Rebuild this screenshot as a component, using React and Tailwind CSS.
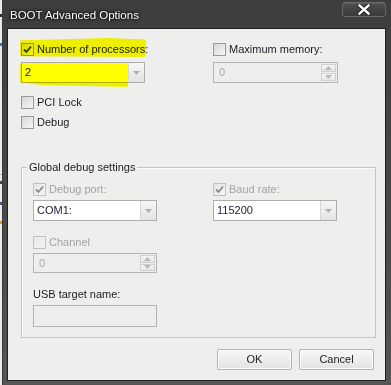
import React from "react";

function Check({ color }) {
  return (
    <svg width="9" height="9" viewBox="0 0 9 9" className="block">
      <path d="M1 4.5 L3.5 7 L8 1.5" fill="none" stroke={color} strokeWidth="1.8" />
    </svg>
  );
}

function Box({ checked, disabled }) {
  return (
    <span
      className={
        "flex h-[13px] w-[13px] shrink-0 items-center justify-center border bg-gradient-to-br " +
        (disabled
          ? "border-[#c2c2c2] from-[#e6e6e6] to-[#f4f4f4]"
          : "border-[#9a9a9a] from-[#d6d6d6] to-[#f6f6f6]")
      }
    >
      {checked && <Check color={disabled ? "#8a8a8a" : "#2a3f86"} />}
    </span>
  );
}

function CheckRow({ label, checked, disabled }) {
  return (
    <div className="flex h-[13px] items-center gap-[3px]">
      <Box checked={checked} disabled={disabled} />
      <span className={disabled ? "text-[#a3a3a3]" : "text-[#1b1b26]"}>{label}</span>
    </div>
  );
}

function Caret({ up, color = "#8c8c8c" }) {
  return (
    <svg width="7" height="4" viewBox="0 0 7 4" className="block">
      <path d={up ? "M0 4 L3.5 0 L7 4 Z" : "M0 0 L7 0 L3.5 4 Z"} fill={color} />
    </svg>
  );
}

function Combo({ value }) {
  return (
    <div className="flex h-[21px] w-[124px] border border-[#adadad] bg-white">
      <span className="flex flex-1 items-center pl-[3px] text-[#23233a]">{value}</span>
      <span className="flex w-[16px] items-center justify-center border-l border-[#d6d6d6] bg-gradient-to-b from-[#f6f6f6] to-[#e4e4e4]">
        <Caret color="#b0b0b0" />
      </span>
    </div>
  );
}

function Spin({ value, width = "w-[125px]", height = "h-[21px]" }) {
  return (
    <div className={"flex border border-[#b4b4b4] " + width + " " + height}>
      <span className="flex flex-1 items-center pl-[5px] text-[#a8a8a8]">{value}</span>
      <span className="flex w-[17px] flex-col gap-[1px] p-[1px]">
        <span className="flex flex-1 items-center justify-center border border-[#cfcfcf] bg-gradient-to-b from-[#f4f4f4] to-[#e6e6e6]">
          <Caret up color="#b8b8b8" />
        </span>
        <span className="flex flex-1 items-center justify-center border border-[#cfcfcf] bg-gradient-to-b from-[#f4f4f4] to-[#e6e6e6]">
          <Caret color="#b8b8b8" />
        </span>
      </span>
    </div>
  );
}

function Button({ children }) {
  return (
    <button className="flex h-[21px] w-[75px] items-center justify-center rounded-[2px] border border-[#b2b2b2] bg-gradient-to-b from-[#f7f7f7] to-[#e3e3e3] text-[#1b1b26] shadow-[inset_0_0_0_1px_#fcfcfc]">
      {children}
    </button>
  );
}

export default function App() {
  return (
    <div className="flex h-[385px] w-[391px] overflow-hidden font-['Liberation_Sans',Arial,sans-serif] text-[11px] leading-[13px]">
      {/* sliver of the window behind */}
      <div className="flex w-[3px] flex-col border-r border-[#3b3b3b] bg-[#eaeaea]">
        <div className="mt-[14px] h-[3px] w-[2px] bg-[#2b2b4a]" />
        <div className="mt-[26px] h-[3px] w-[2px] bg-[#3a78d8]" />
        <div className="mt-[128px] h-px w-[2px] bg-[#b8b8b8]" />
        <div className="mt-[6px] h-[3px] w-[2px] bg-[#444466]" />
        <div className="mt-[18px] h-[3px] w-[2px] bg-[#555577]" />
        <div className="mt-[16px] h-[3px] w-[2px] bg-[#d49a2a]" />
      </div>

      <div className="flex flex-1 flex-col bg-[#4b4b4b] bg-gradient-to-b from-[#3e3e3e] via-[#474747] to-[#555555]">
        {/* title bar */}
        <div className="flex h-[28px] items-start justify-between">
          <span className="mt-[9px] pl-[7px] text-[11.5px] leading-[13px] text-white [text-shadow:0_0_4px_#000,0_0_2px_#000]">
            BOOT Advanced Options
          </span>
          <span className="mr-[5px] mt-[2px] flex h-[15px] w-[44px] items-center justify-center rounded-[3px] border border-[#6a6a6a] bg-gradient-to-b from-[#4e4e4e] to-[#3a3a3a] shadow-[inset_0_1px_0_#5e5e5e]">
            <svg width="14" height="11" viewBox="0 0 14 11" className="block">
              <path d="M2.5 1.5 L11.5 9.5 M11.5 1.5 L2.5 9.5" stroke="#1a1a1a" strokeWidth="4.2" strokeLinecap="square" />
              <path d="M2.5 1.5 L11.5 9.5 M11.5 1.5 L2.5 9.5" stroke="#ffffff" strokeWidth="2.4" strokeLinecap="square" />
            </svg>
          </span>
        </div>

        {/* client area */}
        <div className="relative mb-[4px] ml-[4px] mr-[5px] flex-1 border border-[#1f1f1f] bg-[#eeeeec] pl-[13px] pt-[14px]">
          <div className="grid grid-cols-[192px_125px]">
            <div className="flex flex-col gap-[6px]">
              <CheckRow label="Number of processors:" checked />
              <Combo value="2" />
            </div>
            <div className="flex flex-col gap-[6px]">
              <CheckRow label="Maximum memory:" />
              <Spin value="0" />
            </div>
          </div>

          <div className="mt-[13px] flex flex-col gap-[7px]">
            <CheckRow label="PCI Lock" />
            <CheckRow label="Debug" />
          </div>

          <div className="relative mt-[38px] h-[171px] w-[355px] border border-[#c4c4c4] pl-[11px] pt-[15px] shadow-[inset_1px_1px_0_#fbfbfb]">
            <span className="absolute left-[5px] top-[-7px] bg-[#eeeeec] px-[2px] text-[#1b1b26]">
              Global debug settings
            </span>
            <div className="grid grid-cols-[180px_125px]">
              <div className="flex flex-col gap-[4px]">
                <CheckRow label="Debug port:" checked disabled />
                <Combo value="COM1:" />
              </div>
              <div className="flex flex-col gap-[4px]">
                <CheckRow label="Baud rate:" checked disabled />
                <Combo value="115200" />
              </div>
            </div>
            <div className="mt-[15px] flex flex-col gap-[4px]">
              <CheckRow label="Channel" disabled />
              <Spin value="0" width="w-[124px]" height="h-[20px]" />
            </div>
            <div className="mt-[15px] flex flex-col gap-[4px]">
              <span className="text-[#1b1b26]">USB target name:</span>
              <div className="h-[22px] w-[124px] border border-[#b4b4b4]" />
            </div>
          </div>

          <div className="mt-[11px] flex w-[353px] justify-end gap-[7px]">
            <Button>OK</Button>
            <Button>Cancel</Button>
          </div>

          {/* yellow marker strokes */}
          <div className="pointer-events-none absolute left-[12px] top-[9px] h-[19px] w-[126px] rounded-[3px] bg-[#ffff00] mix-blend-multiply [clip-path:polygon(10%_10%,70%_0,100%_8%,100%_100%,0_96%,0_12%)]" />
          <div className="pointer-events-none absolute left-[12px] top-[34px] h-[24px] w-[108px] rounded-[2px] bg-[#ffff00] mix-blend-multiply [clip-path:polygon(0_0,100%_0,100%_100%,20%_92%,0_80%)]" />
        </div>
      </div>
    </div>
  );
}
